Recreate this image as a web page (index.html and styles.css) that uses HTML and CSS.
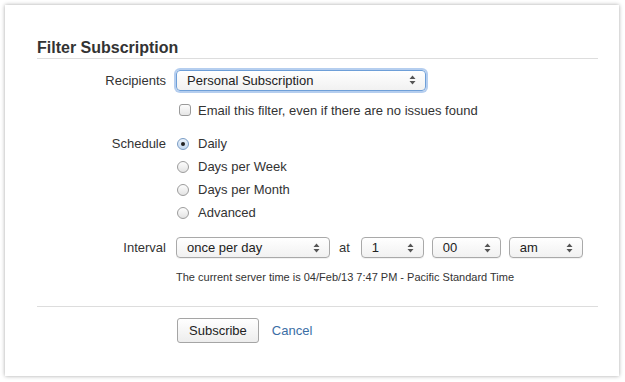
FILE: index.html
```html
<!DOCTYPE html>
<html lang="en">
<head>
    <meta charset="UTF-8">
    <meta name="viewport" content="width=device-width, initial-scale=1.0">
    <title>Filter Subscription</title>
    <link rel="stylesheet" href="styles.css">
</head>
<body>

<div class="dialog">
    <h2 class="dialog-title">Filter Subscription</h2>

    <div class="form">
        <div class="row row-recipients">
            <div class="label">Recipients</div>
            <div class="field">
                <div class="select select-focus select-wide">
                    <span>Personal Subscription</span>
                    <svg class="arrows" width="7" height="10" viewBox="0 0 7 10"><path d="M3.5 0.5 L6.5 4 H0.5 Z M3.5 9.5 L6.5 6 H0.5 Z" fill="#555"/></svg>
                </div>
            </div>
        </div>

        <div class="row row-check">
            <div class="label"></div>
            <div class="field">
                <span class="checkbox"></span>
                <span>Email this filter, even if there are no issues found</span>
            </div>
        </div>

        <div class="row row-schedule">
            <div class="label">Schedule</div>
            <div class="field radios">
                <div class="radio-row"><span class="radio checked"></span>Daily</div>
                <div class="radio-row"><span class="radio"></span>Days per Week</div>
                <div class="radio-row"><span class="radio"></span>Days per Month</div>
                <div class="radio-row"><span class="radio"></span>Advanced</div>
            </div>
        </div>

        <div class="row row-interval">
            <div class="label">Interval</div>
            <div class="field">
                <div class="select select-interval">
                    <span>once per day</span>
                    <svg class="arrows" width="7" height="10" viewBox="0 0 7 10"><path d="M3.5 0.5 L6.5 4 H0.5 Z M3.5 9.5 L6.5 6 H0.5 Z" fill="#555"/></svg>
                </div>
                <span class="at">at</span>
                <div class="select select-hour">
                    <span>1</span>
                    <svg class="arrows" width="7" height="10" viewBox="0 0 7 10"><path d="M3.5 0.5 L6.5 4 H0.5 Z M3.5 9.5 L6.5 6 H0.5 Z" fill="#555"/></svg>
                </div>
                <div class="select select-min">
                    <span>00</span>
                    <svg class="arrows" width="7" height="10" viewBox="0 0 7 10"><path d="M3.5 0.5 L6.5 4 H0.5 Z M3.5 9.5 L6.5 6 H0.5 Z" fill="#555"/></svg>
                </div>
                <div class="select select-ampm">
                    <span>am</span>
                    <svg class="arrows" width="7" height="10" viewBox="0 0 7 10"><path d="M3.5 0.5 L6.5 4 H0.5 Z M3.5 9.5 L6.5 6 H0.5 Z" fill="#555"/></svg>
                </div>
            </div>
        </div>

        <div class="row row-time">
            <div class="label"></div>
            <div class="field server-time">The current server time is 04/Feb/13 7:47 PM - Pacific Standard Time</div>
        </div>
    </div>

    <div class="buttons">
        <button class="button">Subscribe</button>
        <a class="cancel" href="#">Cancel</a>
    </div>
</div>

</body>
</html>
```

FILE: styles.css
```css
body {
    margin: 0;
    background-color: #fff;
    font-family: "Liberation Sans", Arial, sans-serif;
    font-size: 13px;
    color: #333;
}
.dialog {
    margin: 5px;
    width: 614px;
    height: 371px;
    box-sizing: border-box;
    padding: 34px 21px 0 32px;
    background-color: #fff;
    box-shadow: 0 0 4px rgba(0, 0, 0, 0.35);
}
.dialog-title {
    margin: 0;
    font-size: 16px;
    font-weight: bold;
    line-height: 18px;
    color: #333;
    padding-bottom: 1px;
    border-bottom: 1px solid #ddd;
}
.row {
    display: grid;
    grid-template-columns: 129px 1fr;
    column-gap: 10px;
}
.label {
    text-align: right;
}
.field {
    display: flex;
    align-items: center;
}
.row-recipients {
    margin-top: 10px;
    height: 22px;
    align-items: center;
}
.row-check {
    margin-top: 9px;
    height: 20px;
    align-items: center;
}
.row-schedule {
    margin-top: 12px;
}
.row-schedule .label {
    line-height: 23px;
}
.radios {
    flex-direction: column;
    align-items: flex-start;
}
.radio-row {
    height: 23px;
    display: flex;
    align-items: center;
}
.row-interval {
    margin-top: 13px;
    height: 21px;
    align-items: center;
}
.row-time {
    margin-top: 11px;
    height: 16px;
    align-items: center;
}
.server-time {
    font-size: 11px;
}
.select {
    box-sizing: border-box;
    height: 21px;
    display: flex;
    align-items: center;
    justify-content: space-between;
    padding: 0 9px 0 10px;
    border: 1px solid #a9a9a9;
    border-radius: 4px;
    background: linear-gradient(#ffffff, #f1f1f1);
    box-shadow: 0 1px 0 rgba(0, 0, 0, 0.05);
    color: #222;
}
.select-focus {
    border-color: #6e9fd8;
    box-shadow: 0 0 0 2px rgba(120, 165, 225, 0.55);
}
.select-wide {
    width: 250px;
    height: 21px;
}
.select-interval {
    width: 154px;
}
.select-hour {
    width: 63px;
}
.select-min {
    width: 69px;
    margin-left: 8px;
}
.select-ampm {
    width: 74px;
    margin-left: 8px;
}
.at {
    margin: 0 11px 0 9px;
}
.checkbox {
    width: 10px;
    height: 10px;
    border: 1px solid #9a9a9a;
    border-radius: 3px;
    background: linear-gradient(#fcfcfc, #e6e6e6);
    margin: 0 7px 0 3px;
}
.radio {
    width: 12px;
    height: 12px;
    box-sizing: border-box;
    border: 1px solid #9c9c9c;
    border-radius: 50%;
    background: linear-gradient(#fdfdfd, #e3e3e3);
    margin: 0 9px 0 1px;
    display: flex;
    align-items: center;
    justify-content: center;
}
.radio.checked {
    border-color: #7a9cc4;
    background: linear-gradient(#e8f1fb, #c4d8ef);
}
.radio.checked::after {
    content: "";
    width: 4px;
    height: 4px;
    border-radius: 50%;
    background-color: #222;
}
.buttons {
    margin-top: 21px;
    border-top: 1px solid #ddd;
    padding: 11px 0 0 140px;
    display: flex;
    align-items: center;
    gap: 13px;
}
.button {
    font-family: "Liberation Sans", Arial, sans-serif;
    font-size: 13px;
    color: #222;
    height: 25px;
    padding: 0 11px;
    border: 1px solid #a5a5a5;
    border-radius: 3px;
    background: linear-gradient(#ffffff, #ededed);
}
.cancel {
    color: #3b6ea5;
    text-decoration: none;
}
```
